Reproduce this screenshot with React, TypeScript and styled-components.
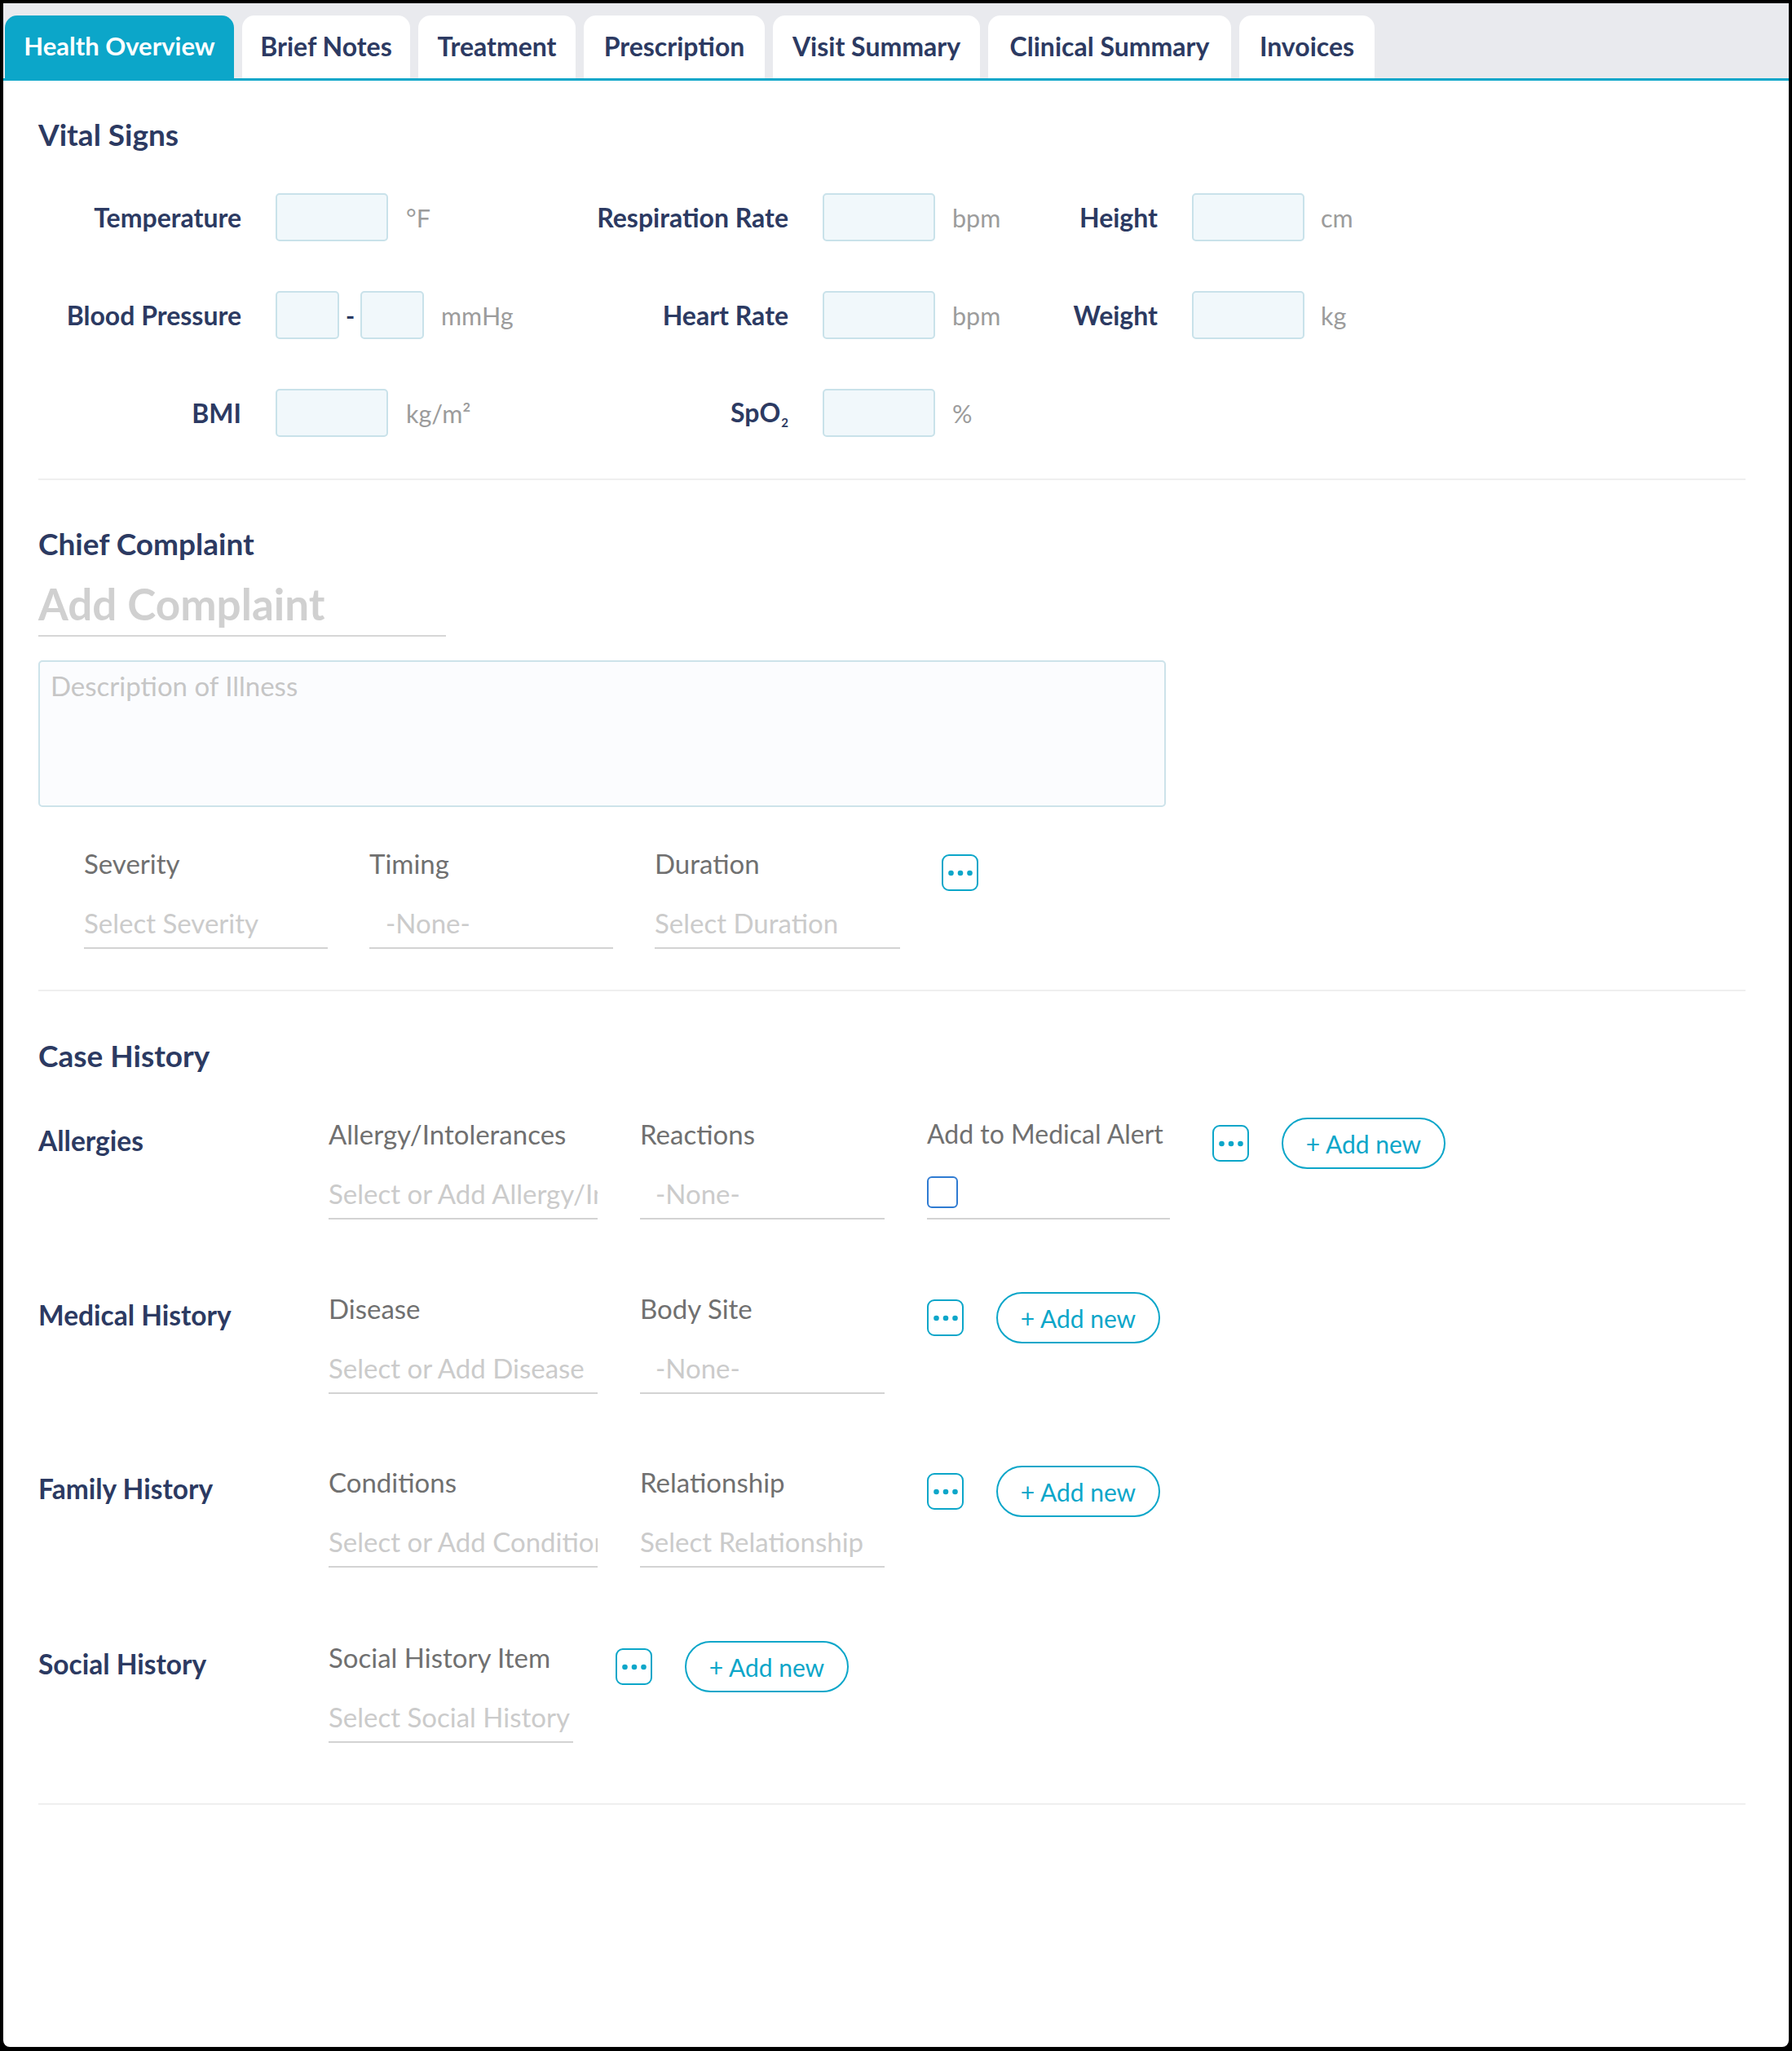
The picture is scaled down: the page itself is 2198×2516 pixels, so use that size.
import React from "react";
import styled, { createGlobalStyle } from "styled-components";

const NAVY = "#2c3a62";
const TEAL = "#0ca6c9";
const GRAY_LABEL = "#707070";
const PLACEHOLDER = "#cbcbcb";
const UNIT = "#9c9c9c";

const GlobalStyle = createGlobalStyle`
  html, body { margin: 0; padding: 0; background: #000; }
  body { font-family: Lato, "Liberation Sans", sans-serif; }
  * { box-sizing: border-box; }
`;

const Window = styled.div`
  margin: 4px 4px 5px 4px;
  height: 2507px;
  background: #fff;
  border-radius: 0 0 8px 8px;
  overflow: hidden;
  display: flex;
  flex-direction: column;
`;

const TabBar = styled.div`
  height: 95px;
  background: #e9eaee;
  border-bottom: 3px solid ${TEAL};
  display: flex;
  align-items: flex-end;
  gap: 10px;
  padding-left: 2px;
`;

const Tab = styled.div<{ $active?: boolean; $w: number }>`
  width: ${(p) => p.$w}px;
  height: 77px;
  padding-bottom: 3px;
  border-radius: 15px 15px 0 0;
  background: ${(p) => (p.$active ? TEAL : "#fff")};
  color: ${(p) => (p.$active ? "#fff" : NAVY)};
  font-size: ${(p) => (p.$active ? 31 : 32)}px;
  font-weight: 700;
  display: flex;
  align-items: center;
  justify-content: center;
  white-space: nowrap;
`;

const Content = styled.div`
  padding: 0 53px 0 43px;
  display: flex;
  flex-direction: column;
`;

const Heading = styled.h2<{ $top: number }>`
  margin: ${(p) => p.$top}px 0 0;
  font-size: 37px;
  line-height: 40px;
  font-weight: 700;
  color: ${NAVY};
`;

const Separator = styled.div<{ $top: number }>`
  margin-top: ${(p) => p.$top}px;
  height: 2px;
  background: #efefef;
`;

const VitalGrid = styled.div`
  margin-top: 52px;
  display: grid;
  grid-template-columns: 249px 180px 182px 309px 180px 121px 152px 180px auto;
  grid-auto-rows: 59px;
  row-gap: 61px;
  align-items: center;
`;

const VitalLabel = styled.div`
  text-align: right;
  font-size: 32px;
  font-weight: 700;
  color: ${NAVY};
  white-space: nowrap;
`;

const Sub = styled.sub`
  font-size: 15px;
  vertical-align: -6px;
  margin-left: 1px;
`;

const VitalInput = styled.div<{ $w?: number }>`
  justify-self: end;
  width: ${(p) => p.$w ?? 138}px;
  height: 59px;
  border: 2px solid #c9e2ea;
  border-radius: 5px;
  background: #f1f8fb;
`;

const Unit = styled.div<{ $pad?: number }>`
  padding-left: ${(p) => p.$pad ?? 22}px;
  font-size: 30.5px;
  color: ${UNIT};
  white-space: nowrap;
`;

const BPCell = styled.div`
  grid-column: span 2;
  display: flex;
  align-items: center;
  gap: 8px;
  padding-left: 42px;
`;

const BPInput = styled(VitalInput)`
  justify-self: auto;
  flex: none;
`;

const Dash = styled.span`
  font-size: 30px;
  font-weight: 700;
  color: ${NAVY};
  width: 10px;
  text-align: center;
`;

const ComplaintInput = styled.div`
  margin-top: 26px;
  width: 500px;
  height: 68px;
  border-bottom: 2px solid #d6d6d6;
  font-size: 53px;
  line-height: 56px;
  font-weight: 700;
  color: #d0d0d0;
  white-space: nowrap;
`;

const DescriptionBox = styled.div`
  margin-top: 29px;
  width: 1383px;
  height: 180px;
  border: 2px solid #cde3ea;
  border-radius: 5px;
  background: #fbfcfe;
  padding: 10px 13px;
  font-size: 33px;
  line-height: 38px;
  color: #c6c6c6;
`;

const Row = styled.div<{ $top: number; $indent?: number; $gap?: number }>`
  margin-top: ${(p) => p.$top}px;
  padding-left: ${(p) => p.$indent ?? 0}px;
  display: flex;
  align-items: flex-start;
  gap: ${(p) => p.$gap ?? 52}px;
`;

const RowLabel = styled.div`
  width: 304px;
  flex: none;
  padding-top: 8px;
  font-size: 33.5px;
  line-height: 38px;
  font-weight: 700;
  color: ${NAVY};
  white-space: nowrap;
`;

const Field = styled.div<{ $w: number }>`
  width: ${(p) => p.$w}px;
  flex: none;
  display: flex;
  flex-direction: column;
`;

const SubLabel = styled.div<{ $size?: number }>`
  font-size: ${(p) => p.$size ?? 33}px;
  line-height: 38px;
  color: ${GRAY_LABEL};
  white-space: nowrap;
`;

const SelectBox = styled.div<{ $indent?: number }>`
  margin-top: 26px;
  height: 60px;
  border-bottom: 2px solid #d3d3d3;
  padding-left: ${(p) => p.$indent ?? 0}px;
  font-size: 33px;
  line-height: 56px;
  color: ${PLACEHOLDER};
  white-space: nowrap;
  overflow: hidden;
`;

const CheckBoxWrap = styled(SelectBox)`
  display: flex;
  align-items: flex-start;
  padding-top: 7px;
`;

const CheckBox = styled.div`
  width: 38px;
  height: 39px;
  border: 2.5px solid #2f7bd2;
  border-radius: 6px;
  background: #fff;
`;

const Actions = styled.div`
  display: flex;
  align-items: center;
  gap: 40px;
  margin-top: -1px;
  height: 63px;
`;

const MoreBtn = styled.div<{ $top?: number }>`
  width: 45px;
  height: 45px;
  flex: none;
  margin-top: ${(p) => p.$top ?? 0}px;
  border: 2px solid ${TEAL};
  border-radius: 9px;
  display: flex;
  align-items: center;
  justify-content: center;
`;

const AddNew = styled.div`
  width: 201px;
  height: 63px;
  border: 2px solid ${TEAL};
  border-radius: 32px;
  display: flex;
  align-items: center;
  justify-content: center;
  font-size: 30px;
  color: ${TEAL};
  white-space: nowrap;
`;

const Dots = () => (
  <svg width="30" height="10" viewBox="0 0 30 10">
    <circle cx="3.5" cy="5" r="3.3" fill={TEAL} />
    <circle cx="15" cy="5" r="3.3" fill={TEAL} />
    <circle cx="26.5" cy="5" r="3.3" fill={TEAL} />
  </svg>
);

const More = ({ top }: { top?: number }) => (
  <MoreBtn $top={top}>
    <Dots />
  </MoreBtn>
);

const ActionGroup = () => (
  <Actions>
    <More />
    <AddNew>+ Add new</AddNew>
  </Actions>
);

const tabs: [string, number][] = [
  ["Health Overview", 281],
  ["Brief Notes", 206],
  ["Treatment", 193],
  ["Prescription", 222],
  ["Visit Summary", 254],
  ["Clinical Summary", 298],
  ["Invoices", 166],
];

export default function App() {
  return (
    <>
      <GlobalStyle />
      <Window>
        <TabBar>
          {tabs.map(([t, w], i) => (
            <Tab key={t} $w={w} $active={i === 0}>
              {t}
            </Tab>
          ))}
        </TabBar>
        <Content>
          <Heading $top={46}>Vital Signs</Heading>
          <VitalGrid>
            <VitalLabel>Temperature</VitalLabel>
            <VitalInput />
            <Unit>°F</Unit>
            <VitalLabel>Respiration Rate</VitalLabel>
            <VitalInput />
            <Unit $pad={21}>bpm</Unit>
            <VitalLabel>Height</VitalLabel>
            <VitalInput />
            <Unit $pad={20}>cm</Unit>

            <VitalLabel>Blood Pressure</VitalLabel>
            <BPCell>
              <BPInput $w={78} />
              <Dash>-</Dash>
              <BPInput $w={78} />
              <Unit $pad={13}>mmHg</Unit>
            </BPCell>
            <VitalLabel>Heart Rate</VitalLabel>
            <VitalInput />
            <Unit $pad={21}>bpm</Unit>
            <VitalLabel>Weight</VitalLabel>
            <VitalInput />
            <Unit $pad={20}>kg</Unit>

            <VitalLabel>BMI</VitalLabel>
            <VitalInput />
            <Unit>kg/m²</Unit>
            <VitalLabel>
              SpO<Sub>2</Sub>
            </VitalLabel>
            <VitalInput />
            <Unit $pad={21}>%</Unit>
          </VitalGrid>
          <Separator $top={51} />

          <Heading $top={58}>Chief Complaint</Heading>
          <ComplaintInput>Add Complaint</ComplaintInput>
          <DescriptionBox>Description of Illness</DescriptionBox>
          <Row $top={50} $indent={56} $gap={51}>
            <Field $w={299}>
              <SubLabel>Severity</SubLabel>
              <SelectBox>Select Severity</SelectBox>
            </Field>
            <Field $w={299}>
              <SubLabel>Timing</SubLabel>
              <SelectBox $indent={20}>-None-</SelectBox>
            </Field>
            <Field $w={301}>
              <SubLabel>Duration</SubLabel>
              <SelectBox>Select Duration</SelectBox>
            </Field>
            <More top={8} />
          </Row>
          <Separator $top={50} />

          <Heading $top={59}>Case History</Heading>
          <Row $top={57}>
            <RowLabel>Allergies</RowLabel>
            <Field $w={330}>
              <SubLabel>Allergy/Intolerances</SubLabel>
              <SelectBox>Select or Add Allergy/Intolerances</SelectBox>
            </Field>
            <Field $w={300}>
              <SubLabel>Reactions</SubLabel>
              <SelectBox $indent={19}>-None-</SelectBox>
            </Field>
            <Field $w={298}>
              <SubLabel $size={32}>Add to Medical Alert</SubLabel>
              <CheckBoxWrap>
                <CheckBox />
              </CheckBoxWrap>
            </Field>
            <ActionGroup />
          </Row>
          <Row $top={90}>
            <RowLabel>Medical History</RowLabel>
            <Field $w={330}>
              <SubLabel>Disease</SubLabel>
              <SelectBox>Select or Add Disease</SelectBox>
            </Field>
            <Field $w={300}>
              <SubLabel>Body Site</SubLabel>
              <SelectBox $indent={19}>-None-</SelectBox>
            </Field>
            <ActionGroup />
          </Row>
          <Row $top={89}>
            <RowLabel>Family History</RowLabel>
            <Field $w={330}>
              <SubLabel>Conditions</SubLabel>
              <SelectBox>Select or Add Conditions</SelectBox>
            </Field>
            <Field $w={300}>
              <SubLabel>Relationship</SubLabel>
              <SelectBox>Select Relationship</SelectBox>
            </Field>
            <ActionGroup />
          </Row>
          <Row $top={91}>
            <RowLabel>Social History</RowLabel>
            <Field $w={300}>
              <SubLabel>Social History Item</SubLabel>
              <SelectBox>Select Social History</SelectBox>
            </Field>
            <ActionGroup />
          </Row>
          <Separator $top={74} />
        </Content>
      </Window>
    </>
  );
}
